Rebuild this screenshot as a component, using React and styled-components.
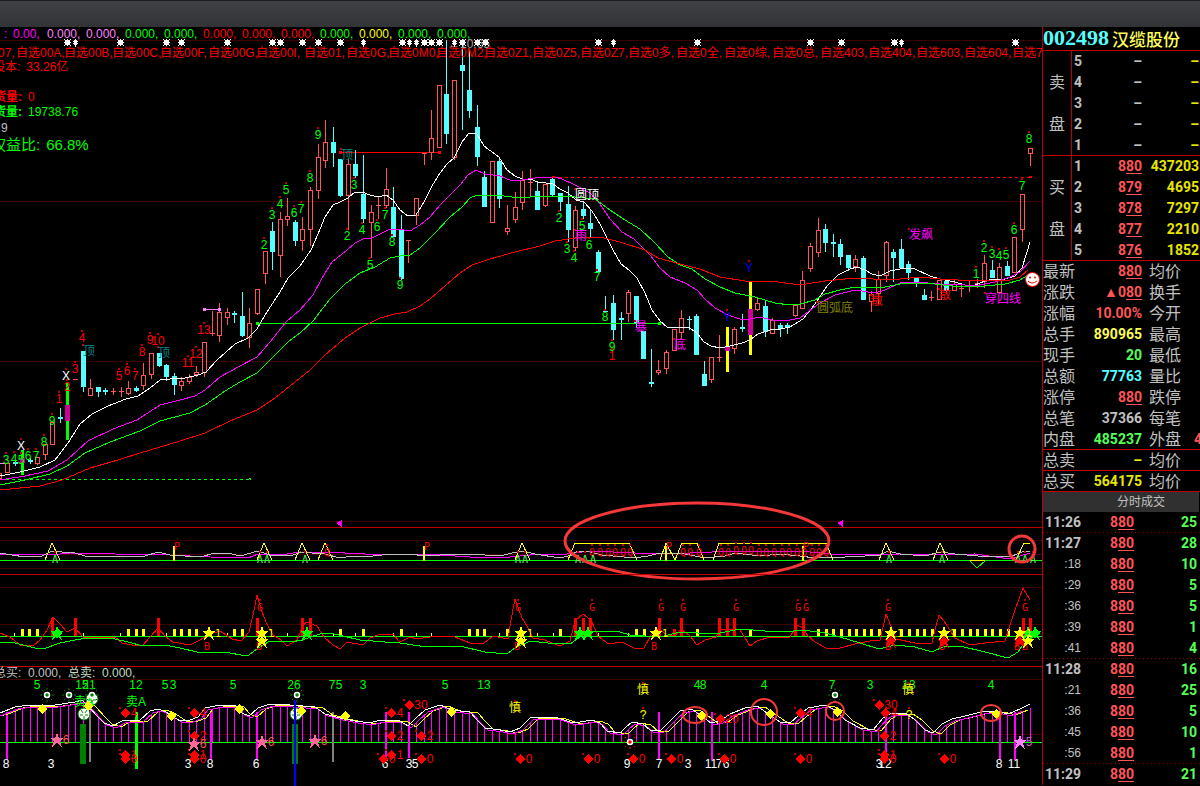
import React from 'react';
import styled, {createGlobalStyle} from 'styled-components';

const GlobalStyle = createGlobalStyle`
    body {
        margin: 0;
        background: #000;
        color: #c0c0c0;
        font-family: 'Liberation Sans', 'Noto Sans CJK SC', sans-serif;
        font-size: 12px;
        overflow: hidden;
    }
`

const RED = '#ff0000';
const ROSE = '#ff5555';
const GREEN = '#00ff00';
const LIME = '#55ff55';
const CYAN = '#55ffff';
const PINK = '#ff80ff';
const MAGENTA = '#ff00ff';
const YELLOW = '#ffff00';
const SILVER = '#c0c0c0';
const TEAL = '#008080';
const DARK = '#400000';
const BORDER = '#c00000';

const TitleBar = styled.header`
    box-sizing: border-box;
    height: 27px;
    border-top: 1px solid #1c1c1e;
    background: linear-gradient(#404145, #323337);
`

const Workspace = styled.div`
    display: flex;
    align-items: flex-start;
`

const Charts = styled.main`
    flex: 1;
    min-width: 0;
`

const Panel = styled.section`
    display: grid;
    grid-template-columns: minmax(0, 1fr);

    > * {
        grid-area: 1 / 1;
    }
`

const Plot = styled.svg`
    display: block;
    width: 100%;
    height: auto;
    overflow: visible;
    shape-rendering: crispEdges;

    text {
        font-size: 12px;
        text-anchor: middle;
    }

    text.mark {
        font: 10px 'DejaVu Sans Mono', monospace;
    }
`

const Info = styled.div`
    overflow: hidden;
    white-space: nowrap;
    z-index: 1;
`

const ParamRow = styled.div`
    display: flex;
    height: 14px;
    line-height: 14px;
    margin-left: ${props => props.$shift || 0}px;
`

const Param = styled.span`
    flex: none;
    width: ${props => props.$wide}px;
    color: ${props => props.$color};
`

const GroupRow = styled.nav`
    display: flex;
    height: 14px;
    margin: 5px 0 0 -26px;
    line-height: 14px;
`

const GroupLink = styled.a`
    flex: none;
    width: ${props => props.$wide}px;
    color: ${RED};
    text-decoration: none;
`

const Note = styled.div`
    display: flex;
    gap: 6px;
    height: ${props => props.$tall || 15}px;
    margin-left: ${props => props.$shift || 0}px;
    color: ${props => props.$color};
    font-size: ${props => props.$size || 12}px;
    line-height: ${props => props.$tall || 15}px;
`

const Side = styled.aside`
    box-sizing: border-box;
    flex: none;
    width: 158px;
    border-left: 1px solid ${BORDER};
    overflow: hidden;
`

const StockTitle = styled.h1`
    display: flex;
    align-items: center;
    gap: 3px;
    box-sizing: border-box;
    height: 24px;
    margin: 0;
    padding-bottom: 2px;
    box-shadow: inset 0 -1px ${BORDER};
    color: #ffff55;
    font-size: 17px;
    font-weight: 500;
    white-space: nowrap;
`

const StockCode = styled.span`
    color: ${CYAN};
    font: bold 22px 'Liberation Serif', serif;
`

const LevelBlock = styled.section`
    display: flex;
    box-shadow: inset 0 -1px ${BORDER};
`

const SideLabel = styled.h2`
    box-sizing: border-box;
    width: 29px;
    margin: 0;
    padding: 11px 0 0 6px;
    border-right: 1px solid ${BORDER};
    font-size: 16px;
    font-weight: 400;
    line-height: 42px;

    span {
        display: block;
    }
`

const Table = styled.table`
    flex: 1;
    width: 100%;
    table-layout: fixed;
    border-collapse: collapse;
    box-shadow: ${props => props.$plain ? 'none' : `inset 0 -1px ${BORDER}`};
`

const Row = styled.tr`
    height: 21px;
    background: ${props => props.$dotted ? `repeating-linear-gradient(90deg, #a00000 0 1px, transparent 1px 4px) bottom / 100% 1px no-repeat` : 'none'};
`

const Cell = styled.td`
    width: ${props => props.$wide ? `${props.$wide}px` : 'auto'};
    padding: 0 ${props => props.$end || 0}px 2px ${props => props.$start || 0}px;
    box-sizing: border-box;
    color: ${props => props.$color || SILVER};
    font: bold 14px/18px Roboto, sans-serif;
    text-align: ${props => props.$left ? 'left' : 'right'};
    white-space: nowrap;
    overflow: hidden;
`

const NameCell = styled.th`
    box-sizing: border-box;
    width: ${props => props.$wide}px;
    padding: 0 0 0 ${props => props.$start || 0}px;
    font-size: 16px;
    font-weight: 400;
    line-height: 20px;
    text-align: left;
    white-space: nowrap;
`

const Cents = styled.span`
    display: inline-block;
    border-bottom: 1px solid ${ROSE};
    line-height: 14px;
`

const Second = styled.span`
    font: 12px/18px 'Liberation Sans', sans-serif;
`

const TapeTitle = styled.h2`
    height: 20px;
    margin: 0 1px 0 0;
    padding-left: 74px;
    background: #303030;
    font-size: 12px;
    font-weight: 400;
    line-height: 20px;
`

const xAt = i => Math.round(7 + 7.575 * i);

// [index, rising, high, open/close top, open/close bottom, low]
const candles = [
    [-1, 1, 473, 473, 479, 479], [0, 1, 463, 463, 473, 473], [1, 0, 460, 462, 464, 466], [3, 0, 458, 460, 462, 464],
    [4, 1, 457, 457, 464, 465], [5, 1, 444, 444, 455, 460], [6, 1, 422, 422, 445, 445], [7, 0, 408, 417, 419, 423],
    [9, 1, 379, 379, 379, 379], [10, 0, 351, 351, 387, 392], [11, 1, 379, 388, 396, 396], [12, 0, 387, 387, 392, 397],
    [13, 0, 388, 390, 392, 395], [14, 1, 388, 391, 391, 395], [15, 1, 387, 391, 391, 397], [16, 1, 381, 388, 394, 395],
    [17, 0, 386, 388, 391, 392], [18, 1, 363, 375, 386, 390], [19, 1, 353, 353, 375, 379], [20, 0, 353, 353, 366, 367],
    [21, 0, 364, 365, 377, 381], [22, 0, 373, 376, 385, 395], [23, 1, 377, 381, 386, 391], [24, 1, 374, 377, 382, 384],
    [25, 1, 366, 372, 375, 377], [26, 1, 342, 342, 373, 377], [27, 1, 311, 333, 333, 336], [28, 1, 303, 312, 336, 342],
    [29, 1, 308, 312, 318, 325], [30, 0, 311, 313, 315, 323], [31, 0, 292, 316, 336, 337], [32, 1, 308, 323, 338, 348],
    [33, 1, 289, 289, 314, 315], [34, 1, 251, 251, 274, 284], [35, 0, 222, 231, 252, 270], [36, 1, 212, 219, 256, 277],
    [37, 1, 198, 216, 220, 226], [38, 0, 220, 222, 241, 246], [39, 1, 217, 229, 241, 251], [40, 1, 187, 190, 230, 246],
    [41, 1, 144, 157, 191, 199], [42, 1, 120, 142, 161, 168], [43, 0, 127, 142, 153, 167], [44, 0, 159, 159, 196, 197],
    [45, 1, 159, 164, 196, 230], [46, 0, 150, 164, 176, 178], [47, 0, 155, 194, 219, 223], [48, 1, 205, 212, 223, 258],
    [49, 1, 197, 205, 205, 219], [50, 1, 168, 189, 206, 208], [51, 0, 187, 207, 237, 237], [52, 0, 215, 229, 279, 280],
    [53, 1, 240, 240, 240, 263], [54, 1, 198, 198, 216, 225], [55, 1, 153, 153, 153, 165], [56, 1, 110, 138, 153, 160],
    [57, 1, 85, 85, 148, 148], [58, 0, 40, 94, 134, 144], [59, 1, 80, 80, 158, 160], [60, 0, 40, 65, 71, 130],
    [61, 0, 50, 90, 111, 118], [62, 0, 105, 127, 157, 166], [63, 0, 171, 177, 207, 207], [64, 1, 161, 161, 223, 223],
    [65, 0, 159, 161, 199, 208], [66, 1, 205, 228, 232, 235], [67, 1, 192, 207, 220, 223], [68, 1, 171, 180, 203, 210],
    [69, 1, 169, 182, 183, 196], [70, 0, 182, 191, 210, 210], [71, 1, 184, 184, 206, 207], [72, 0, 177, 179, 195, 196],
    [73, 0, 193, 193, 202, 211], [74, 0, 186, 204, 230, 242], [75, 1, 206, 210, 248, 251], [76, 0, 201, 209, 216, 219],
    [77, 0, 209, 223, 229, 237], [78, 0, 250, 252, 272, 272], [79, 0, 296, 311, 312, 312], [80, 0, 295, 303, 330, 340],
    [81, 0, 312, 318, 320, 340], [82, 1, 290, 292, 314, 322], [83, 0, 296, 296, 324, 328], [84, 0, 331, 331, 359, 359],
    [85, 0, 349, 382, 384, 387], [86, 1, 360, 370, 373, 375], [87, 1, 350, 352, 369, 374], [88, 1, 329, 329, 351, 351],
    [89, 1, 310, 318, 333, 339], [90, 0, 316, 319, 320, 330], [91, 0, 314, 316, 355, 355], [92, 0, 361, 374, 386, 386],
    [93, 1, 357, 357, 380, 383], [94, 1, 335, 357, 357, 362], [96, 1, 327, 329, 349, 354], [97, 0, 314, 327, 329, 332],
    [99, 1, 298, 303, 310, 311], [100, 0, 301, 306, 332, 337], [101, 1, 318, 320, 334, 334], [102, 0, 323, 325, 329, 337],
    [103, 0, 323, 325, 328, 334], [104, 1, 305, 305, 316, 317], [105, 1, 271, 280, 309, 309], [106, 1, 243, 246, 269, 272],
    [107, 1, 218, 230, 253, 257], [108, 0, 224, 229, 243, 252], [109, 0, 234, 242, 244, 257], [110, 0, 239, 244, 257, 265],
    [111, 0, 255, 255, 268, 271], [112, 1, 255, 259, 267, 272], [113, 0, 256, 258, 300, 300], [114, 1, 291, 294, 302, 312],
    [115, 1, 271, 279, 294, 304], [116, 1, 241, 242, 276, 282], [117, 0, 249, 252, 258, 282], [118, 0, 239, 249, 268, 268],
    [119, 0, 261, 264, 273, 280], [120, 0, 278, 278, 282, 287], [121, 0, 289, 295, 300, 300], [122, 1, 291, 297, 297, 301],
    [123, 1, 280, 280, 300, 300], [124, 0, 281, 281, 291, 293], [125, 1, 279, 284, 291, 291], [126, 1, 285, 288, 288, 297],
    [127, 1, 281, 286, 286, 292], [128, 1, 279, 283, 286, 288], [129, 1, 255, 263, 282, 288], [130, 0, 260, 270, 278, 278],
    [131, 1, 263, 267, 293, 293], [132, 0, 261, 266, 276, 276], [133, 1, 237, 237, 273, 273], [134, 1, 194, 194, 230, 242],
    [135, 1, 148, 148, 154, 166]
];

const averages = [
    ['#ffffff', '0,476 20,472 40,467 55,460 68,443 80,424 92,414 108,406 126,399 138,396 150,388 160,380 170,379 185,378 198,375 206,372 217,360 235,344 248,338 257,329 265,315 280,292 288,278 300,266 311,250 318,234 325,217 333,205 340,202 348,198 355,192 362,192 370,195 378,197 386,195 393,200 400,210 408,216 416,215 424,202 432,186 440,173 447,164 454,158 462,142 469,133 477,134 484,146 492,152 499,157 507,170 515,176 522,179 530,179 538,182 546,183 553,184 560,189 568,193 576,200 584,202 592,211 600,224 613,250 621,264 629,270 637,278 645,293 652,310 660,321 667,327 675,328 688,327 697,333 704,342 711,346 720,348 730,346 742,343 750,340 758,334 770,330 780,329 790,327 803,319 815,304 827,286 838,275 850,269 857,267 865,270 872,274 880,276 890,271 905,268 915,269 930,276 940,279 955,282 965,285 975,285 985,281 993,279 1005,279 1015,276 1022,268 1027,252 1030,242'],
    [MAGENTA, '0,480 25,476 48,471 67,460 88,441 113,429 137,420 160,405 180,400 195,396 205,390 220,377 240,366 257,357 270,342 286,322 300,310 313,295 322,278 332,262 347,250 355,243 363,239 372,238 380,234 390,229 398,229 410,231 420,225 430,217 440,205 450,195 460,185 468,175 476,170 485,174 500,176 512,181 522,180 535,178 555,177 562,179 575,185 590,193 600,204 610,219 622,232 634,239 643,248 650,255 660,268 670,277 685,283 697,290 705,299 715,308 728,315 740,319 750,319 760,317 772,320 790,320 800,318 808,312 820,303 835,295 855,290 875,293 885,290 900,283 915,282 940,284 955,284 975,286 995,282 1010,277 1020,272 1030,261'],
    [GREEN, '0,485 25,480 50,474 67,466 85,453 110,442 140,431 160,421 190,413 205,405 225,391 240,382 257,373 272,358 288,342 300,333 313,321 330,299 345,284 360,273 375,267 390,258 400,256 410,255 420,248 435,233 450,217 462,207 470,198 477,195 495,195 512,197 530,197 560,196 575,197 595,199 610,210 625,220 640,229 655,243 668,257 680,265 692,269 705,279 720,287 735,293 755,297 775,303 790,305 800,304 815,300 825,294 840,290 855,287 870,288 885,287 900,284 915,283 935,284 960,287 985,286 1005,284 1020,280 1028,275'],
    [RED, '0,490 40,486 62,480 90,468 118,460 140,453 160,447 180,441 205,433 230,421 257,410 275,398 290,386 310,370 325,355 345,338 360,328 380,318 395,314 407,312 420,306 430,299 445,286 460,273 472,265 490,259 515,252 540,246 555,241 575,238 600,237 620,242 645,250 658,258 680,264 700,269 720,277 745,281 770,281 800,285 825,281 855,278 890,280 920,277 940,279 975,281 1010,280 1020,277 1028,270']
];

// [text, middle x, middle y, colour]
const countLabels = [
    ['3', 6, 460, GREEN], ['4', 14, 459, GREEN], ['5', 21, 460, GREEN], ['6', 28, 456, GREEN], ['7', 36, 456, GREEN],
    ['8', 44, 442, GREEN], ['9', 52, 421, GREEN], ['1', 59, 399, RED], ['2', 67, 387, RED], ['3', 75, 369, RED],
    ['4', 82, 338, RED], ['5', 119, 376, RED], ['6', 127, 371, RED], ['7', 135, 376, RED], ['8', 142, 352, RED],
    ['9', 150, 340, RED], ['10', 158, 341, RED], ['11', 188, 363, RED], ['12', 196, 354, RED], ['13', 204, 330, RED],
    ['2', 264, 245, GREEN], ['3', 272, 215, GREEN], ['4', 280, 204, GREEN], ['5', 286, 190, GREEN], ['6', 294, 213, GREEN],
    ['7', 301, 209, GREEN], ['8', 310, 178, GREEN], ['9', 318, 135, GREEN], ['2', 347, 236, GREEN], ['3', 354, 185, GREEN],
    ['4', 362, 230, GREEN], ['5', 370, 265, GREEN], ['6', 377, 227, GREEN], ['7', 385, 215, GREEN], ['8', 392, 242, GREEN],
    ['9', 400, 285, GREEN], ['2', 559, 218, GREEN], ['3', 567, 249, GREEN], ['4', 574, 258, GREEN], ['5', 582, 226, GREEN],
    ['6', 589, 245, GREEN], ['7', 597, 277, GREEN], ['8', 605, 317, GREEN], ['9', 612, 347, GREEN], ['1', 612, 356, RED],
    ['1', 976, 274, GREEN], ['2', 984, 248, GREEN], ['3', 992, 254, GREEN], ['4', 999, 256, GREEN], ['5', 1006, 255, GREEN],
    ['6', 1014, 230, GREEN], ['7', 1022, 186, GREEN], ['8', 1029, 139, GREEN], ['X', 21, 446, '#fff'], ['X', 66, 376, '#fff'],
    ['Y', 749, 268, '#0000ff'], ['Y', 727, 317, '#0000ff']
];

const wordLabels = [
    ['顶', 89, 351, TEAL], ['顶', 164, 353, TEAL], ['顶', 347, 155, TEAL], ['圆顶', 587, 195, '#fff'],
    ['雨', 581, 236, MAGENTA], ['暴', 641, 327, MAGENTA], ['底', 680, 345, MAGENTA], ['发飙', 921, 235, MAGENTA],
    ['穿四线', 1003, 299, MAGENTA], ['圆弧底', 835, 308, '#808000'], ['散', 877, 301, RED], ['散', 945, 295, RED]
];

const stars = [67, 120, 166, 181, 227, 272, 280, 302, 318, 340, 402, 424, 431, 439, 462, 477, 485, 598, 697, 810, 841, 894, 1015];
const slimStars = [75, 363, 409, 416, 454, 613, 901];

const Label = ({text, x, y, color, dot, mark}) => (
    <>
        {dot && <rect x={x - 1} y={y - 8} width={2} height={2} fill='#c00000' />}
        <text className={mark && 'mark'} x={x} y={y + 4} fill={color}>{text}</text>
    </>
)

const Line = ({y, color = DARK, from = 0, to = 1042, dash}) => (
    <path d={`M${from} ${y + 0.5}H${to}`} stroke={color} strokeDasharray={dash} />
)

const Curve = ({points, color}) => (
    <polyline points={points} fill='none' stroke={color} />
)

const Candle = ({data}) => {
    const [i, rising, high, top, bottom, low] = data;
    const x = xAt(i);
    const tall = bottom - top;
    if (!rising) {
        return (
            <g fill={CYAN}>
                <rect x={x} y={high} width={1} height={low - high} />
                <rect x={x - 2} y={top} width={5} height={Math.max(tall, 1)} />
            </g>
        );
    }
    return (
        <g fill={ROSE}>
            <rect x={x} y={high} width={1} height={Math.max(top - high, 0)} />
            <rect x={x} y={bottom} width={1} height={Math.max(low - bottom, 0)} />
            {tall < 2
                ? <rect x={x - 2} y={top} width={5} height={1} />
                : <rect x={x - 1.5} y={top + 0.5} width={4} height={tall - 1} fill='none' stroke={ROSE} />}
        </g>
    );
}

const Signal = ({x, top, bottom, from, to, color}) => (
    <g>
        <rect x={x - 1} y={top} width={3} height={bottom - top} fill={color} />
        <rect x={x - 2} y={from} width={5} height={to - from} fill='#cc0099' />
    </g>
)

const params = [
    [PINK, '0.000,'], [PINK, '0.000,'], [GREEN, '0.000,'], [GREEN, '0.000,'], [RED, '0.000,'], [RED, '0.000,'],
    [RED, '0.000,'], [GREEN, '0.000,'], [YELLOW, '0.000,'], [GREEN, '0.000,'], [GREEN, '0.000,']
];

const groups = ['07', '00A', '00B', '00C', '00F', '00G', '00I', '01', '0G', '0M0', '0M2', '0Z1', '0Z5', '0Z7', '0多', '0全', '0综', '0总', '403', '404', '603', '604', '705'];

const PricePanel = () => (
    <Panel>
        <Plot viewBox='0 27 1042 500'>
            <Line y={40} />
            <Line y={201} />
            <Line y={361} />
            <Line y={521} />
            <Line y={152} color={RED} from={341} to={440} />
            <Line y={177} color={RED} from={553} to={1030} dash='3 3' />
            <Line y={479} color={GREEN} to={250} dash='3 3' />
            <Line y={309} color={PINK} from={204} to={220} />
            <Line y={463} color={PINK} to={8} />
            {candles.map(c => <Candle key={c[0]} data={c} />)}
            <Signal x={22} top={450} bottom={475} from={458} to={463} color={GREEN} />
            <Signal x={67} top={383} bottom={440} from={405} to={421} color={GREEN} />
            <Signal x={727} top={327} bottom={372} from={346} to={351} color={YELLOW} />
            <Signal x={750} top={281} bottom={355} from={309} to={335} color={YELLOW} />
            <Line y={323} color={GREEN} from={257} to={660} />
            {averages.map(a => <Curve key={a[0]} color={a[0]} points={a[1]} />)}
            <path d='M256 322h3v3h-3zM658 322h3v3h-3zM248 478h3v3z' fill={GREEN} />
            <path d='M203 308h3v3h-3zM218 308h3v3h-3z' fill={PINK} />
            <path d='M339 151h3v3h-3zM438 151h3v3h-3zM552 176h3v2h-3zM1029 176h3v2h-3z' fill={RED} />
            <Label text='←10.65' x={469} y={44} color='#a0a0a0' />
            {stars.map(x => (
                <path key={x} d={`M${x - 2} 40h5v5h-5zM${x - 3} 39h1v1h-1zM${x} 39h1v7h-1zM${x + 3} 39h1v1h-1zM${x - 3} 42h7v1h-7zM${x - 3} 45h1v1h-1zM${x + 3} 45h1v1h-1z`} fill='#fff' />
            ))}
            {slimStars.map(x => <path key={x} d={`M${x} 39h1v8h-1zM${x - 2} 41h5v1h-5zM${x - 1} 40h3v5h-3zM${x - 2} 43h5v1h-5z`} fill='#fff' />)}
            {wordLabels.map(([t, x, y, c]) => (
                <g key={t + x}>
                    <rect x={x - 6 * t.length - 1} y={y - 7} width={2} height={2} fill='#c00000' />
                    <Label text={t} x={x} y={y} color={c} />
                </g>
            ))}
            {countLabels.map(([t, x, y, c]) => <Label key={t + x + y} text={t} x={x} y={y} color={c} dot />)}
            <g shapeRendering='auto'>
                <circle cx={1032.5} cy={279.5} r={7} fill='#fff' stroke={RED} />
                <circle cx={1030} cy={277.5} r={1} fill={RED} />
                <circle cx={1035} cy={277.5} r={1} fill={RED} />
                <path d='M1028 281q4 4 9 0' fill='none' stroke={RED} />
            </g>
            <path d='M336 523l6-3v7zM837 523l6-3v7z' fill={MAGENTA} />
        </Plot>
        <Info>
            <ParamRow $shift={4}>
                <Param $wide={9} $color={MAGENTA}>:</Param>
                <Param $wide={34} $color={MAGENTA}>0.00,</Param>
                {params.map(([color, text], i) => <Param key={i} $wide={39} $color={color}>{text}</Param>)}
            </ParamRow>
            <GroupRow>
                {groups.map(g => <GroupLink key={g} href={`#${g}`} $wide={g.length === 2 && /\w\w/.test(g) ? 42 : 48}>自选{g},</GroupLink>)}
            </GroupRow>
            <Note $shift={-7} $color={RED}><span>股本:</span>33.26亿</Note>
            <Note />
            <Note $shift={-6} $color={RED}><b>货量:</b><span>0</span></Note>
            <Note $shift={-6} $color={GREEN}><b>货量:</b><span>19738.76</span></Note>
            <Note $shift={1} $tall={17}>9</Note>
            <Note $shift={-9} $tall={16} $size={15} $color={GREEN}><span>权益比:</span>66.8%</Note>
        </Info>
    </Panel>
)

const peaks = [52, 264, 302, 325, 522, 886, 940];
const waveGrey = '0,553 12,555 25,557 42,556 52,551 62,552 75,553 85,556 120,557 145,556 158,552 170,555 200,557 215,553 228,553 240,556 258,551 270,555 290,556 302,552 312,553 325,554 340,558 352,556 365,557 390,554 410,554 425,556 440,555 470,554 500,556 512,553 522,551 535,554 560,558 572,555 577,551 590,552 602,555 635,558 648,556 660,553 680,553 690,555 705,558 725,556 735,553 760,556 780,554 800,556 815,558 845,557 865,556 880,555 888,551 900,554 925,556 940,552 955,554 990,557 1012,556 1022,552 1030,551';
const waveMagenta = '0,554 50,555 70,553 115,554 170,555 210,557 248,558 258,554 280,555 300,552 345,553 365,554 400,554 440,555 470,557 510,557 540,554 560,555 590,551 635,553 690,553 735,551 800,551 830,554 860,555 900,554 940,555 975,554 1010,559 1020,556 1030,553';
const qMarks = [[327, 552], [592, 552], [600, 552], [608, 552], [615, 552], [623, 552], [630, 552], [683, 552], [690, 552], [699, 552], [721, 552], [728, 552], [736, 550], [744, 550], [751, 550], [759, 552], [766, 552], [774, 552], [782, 552], [789, 552], [797, 552], [804, 552], [812, 552], [819, 552], [826, 552]];

const SignalPanel = () => (
    <Panel>
        <Plot viewBox='0 527 1042 47'>
            <Line y={527} color={BORDER} />
            <Line y={540} />
            <Line y={554} />
            <Line y={568} />
            <Curve points={waveMagenta} color={MAGENTA} />
            <Curve points={waveGrey} color={SILVER} />
            {peaks.map(x => <Curve key={x} points={`${x - 7},560 ${x},543 ${x + 8},560`} color={YELLOW} />)}
            <Curve points='568,560 575,543 629,543 637,560' color={YELLOW} />
            <Curve points='660,560 666,543 675,560 682,543 697,543 704,560' color={YELLOW} />
            <Curve points='713,560 719,543 826,543 833,560' color={YELLOW} />
            <Curve points='1016,560 1024,543 1030,543' color={YELLOW} />
            <Line y={560} color={GREEN} />
            <Line y={560} color={YELLOW} from={970} to={985} />
            <Curve points='970,561 977,568 985,561' color={GREEN} />
            {[174, 424, 666, 803].map(x => (
                <g key={x}>
                    <rect x={x - 1} y={546} width={2} height={15} fill={YELLOW} />
                    <Label text='P' x={x + 3} y={546} color={RED} mark />
                </g>
            ))}
            {qMarks.map(([x, y]) => <Label key={x} text='Q' x={x} y={y} color={RED} mark dot />)}
            {[55, 260, 267, 305, 518, 525, 578, 585, 593, 889, 942, 1018, 1025, 1033].map(x => (
                <Label key={x} text='A' x={x} y={559} color={LIME} mark dot />
            ))}
            <g fill='none' stroke='#f53838' strokeWidth={3} shapeRendering='auto'>
                <ellipse cx={697} cy={541} rx={132} ry={38} />
                <circle cx={1022} cy={549} r={13} />
            </g>
        </Plot>
    </Panel>
)

const tallBars = [52, 75, 158, 257, 302, 310, 575, 583, 590, 659, 681, 719, 727, 734, 795, 803, 1023, 1030];
const midBars = [22, 29, 37, 128, 136, 143, 174, 181, 189, 196, 234, 242, 340, 363, 401, 469, 477, 484, 507, 560, 636, 644, 697, 750, 818, 826, 833, 841, 849, 856, 864, 871, 879, 901, 909, 917, 924, 932, 954, 962, 970, 977, 985, 992, 1000, 1008];
const lowBars = [14, 83, 120, 166, 227, 287, 333, 355, 393, 416, 431, 499, 537, 553, 598, 628];
const strengthRed = '0,633 10,637 20,645 33,646 40,640 47,630 53,617 60,624 67,632 75,628 83,637 97,638 115,637 122,643 137,646 143,645 150,637 158,628 166,637 173,642 190,645 200,640 210,634 220,631 232,639 241,641 249,632 253,615 257,595 262,612 267,624 273,635 281,640 287,646 297,640 302,628 306,622 317,626 324,637 333,645 340,649 347,642 363,645 370,638 378,635 393,634 400,642 410,637 417,639 430,637 440,636 455,637 470,643 484,643 493,636 508,639 511,620 515,599 522,618 527,626 533,638 545,640 552,643 560,646 570,641 575,621 583,614 591,620 598,636 607,643 615,643 622,642 634,648 644,648 651,635 659,628 666,635 675,636 681,629 690,636 697,645 705,640 716,637 721,629 740,630 750,646 757,641 770,637 790,637 797,625 803,628 808,636 815,642 826,648 840,648 855,644 870,641 880,640 886,614 891,626 896,639 915,643 932,643 935,630 939,615 944,621 955,638 970,645 985,643 1005,641 1010,625 1015,610 1023,588 1030,600';
const strengthGreen = '0,642 15,643 35,648 46,648 60,643 75,640 87,638 115,639 128,642 143,646 165,645 180,648 197,652 230,653 241,655 249,655 258,648 270,641 290,642 303,640 310,637 320,634 330,633 343,636 360,640 385,642 400,643 420,646 460,646 485,652 507,654 515,648 530,641 548,643 570,644 580,637 590,631 620,632 630,635 660,637 680,632 715,634 740,629 765,631 785,632 803,630 825,633 840,637 860,643 879,649 895,645 915,647 932,652 945,646 960,646 985,652 1008,658 1018,652 1022,646';

const Star = ({x, y, color}) => (
    <path transform={`translate(${x} ${y})`} d='M0-7L2-2H7L3 1L5 7L0 3L-5 7L-3 1L-7-2H-2Z' fill={color} />
)

const StrengthPanel = () => (
    <Panel>
        <Plot viewBox='0 574 1042 92'>
            <Line y={574} color={BORDER} />
            <Line y={587} />
            <Line y={624} />
            <Line y={660} />
            {tallBars.map(x => <rect key={x} x={x - 1} y={618} width={3} height={19} fill={RED} />)}
            {midBars.map(x => <rect key={x} x={x - 1} y={629} width={3} height={8} fill={YELLOW} />)}
            {lowBars.map(x => <rect key={x} x={x} y={633} width={1} height={4} fill={YELLOW} />)}
            <rect x={673} y={629} width={3} height={8} fill={RED} />
            <Line y={636} color={GREEN} />
            <Curve points={strengthRed} color={RED} />
            <Curve points={strengthGreen} color={GREEN} />
            {[207, 259, 517, 654, 888, 942, 1017, 1025].map(x => <Label key={x} text='B' x={x} y={646} color={RED} mark />)}
            {[260, 518, 592, 661, 683, 736, 798, 806, 888, 1025].map(x => <Label key={x} text='G' x={x} y={607} color={RED} mark dot />)}
            {[891, 944, 1020].map(x => <Star key={x} x={x} y={641} color={RED} />)}
            {[57, 307, 580, 588, 1028, 1035].map(x => <Star key={x} x={x} y={633} color={GREEN} />)}
            {[262, 521, 1028].map(x => <Star key={x} x={x} y={641} color={YELLOW} />)}
            {[209, 262, 521, 656, 891, 944, 1020].map(x => (
                <g key={x}>
                    <Star x={x} y={633} color={YELLOW} />
                    <Label text='1' x={x + 9} y={633} color={YELLOW} mark />
                </g>
            ))}
            <path d='M57 628l5 5l-5 6l-5-6zM1035 628l5 5l-5 6l-5-6z' fill={GREEN} />
        </Plot>
    </Panel>
)

const wave = [
    [-8, 715], [0, 713], [15, 707], [30, 705], [55, 705], [75, 702], [82, 700], [88, 706], [97, 716], [104, 723], [113, 726], [122, 721], [140, 720],
    [150, 711], [158, 709], [166, 712], [180, 721], [190, 720], [198, 717], [205, 708], [220, 705], [235, 705], [242, 713],
    [249, 716], [258, 708], [270, 704], [290, 705], [315, 707], [325, 714], [340, 718], [355, 721], [370, 723], [380, 720],
    [400, 721], [408, 726], [416, 718], [425, 710], [440, 705], [452, 710], [470, 712], [477, 720], [485, 728], [500, 730],
    [510, 732], [520, 728], [530, 718], [555, 717], [570, 722], [580, 722], [592, 720], [600, 723], [607, 731], [620, 733],
    [625, 728], [632, 722], [643, 724], [650, 730], [660, 731], [670, 721], [680, 711], [692, 709], [700, 715], [711, 723],
    [720, 721], [730, 714], [745, 708], [757, 706], [767, 713], [780, 722], [790, 723], [798, 716], [808, 708], [825, 705],
    [835, 710], [845, 720], [860, 728], [873, 730], [883, 718], [892, 713], [905, 713], [914, 719], [925, 730], [933, 733],
    [942, 724], [952, 719], [965, 716], [985, 711], [1000, 712], [1008, 714], [1020, 709], [1030, 704]
];

const shifted = (dx, dy) => wave.map(([x, y]) => [x + dx, y + dy]).filter(p => p[0] < 1031).join(' ');

const waveY = at => {
    const k = wave.findIndex(p => p[0] >= at);
    if (k < 1) return wave[wave.length - 1][1];
    const [x0, y0] = wave[k - 1];
    const [x1, y1] = wave[k];
    return Math.round(y0 + (y1 - y0) * (at - x0) / (x1 - x0));
}

const topCounts = [['5', 37], ['15', 82], ['21', 89], ['12', 136], ['5', 165], ['3', 173], ['5', 233], ['26', 294], ['7', 332], ['5', 339], ['3', 363], ['5', 445], ['13', 484], ['4', 697], ['8', 703], ['4', 764], ['7', 832], ['3', 870], ['13', 909], ['4', 991]];
const bottomCounts = [['8', 6], ['3', 51], ['3', 188], ['8', 210], ['6', 256], ['6', 385], ['3', 409], ['5', 415], ['9', 627], ['7', 659], ['3', 688], ['11', 711], ['7', 719], ['6', 726], ['3', 879], ['12', 885], ['8', 999], ['11', 1014]];
const longBars = [[7, 712, 760], [211, 712, 760], [257, 712, 760], [386, 712, 760], [409, 712, 758], [659, 712, 760], [712, 712, 760], [886, 716, 760], [1000, 714, 760], [1015, 712, 760]];
const yellowDiamonds = [[42, 709], [88, 706], [171, 716], [239, 709], [301, 711], [345, 716], [451, 712], [701, 716], [770, 714], [837, 712], [996, 714]];
const redDiamonds = [
    [125, 713, '4'], [125, 755, '1'], [125, 759, '0'], [194, 713, '4'], [194, 736, '2'], [194, 755, '1'], [194, 759, '0'],
    [391, 713, '4'], [391, 736, '2'], [391, 755, '1'], [383, 759, '0'], [409, 705, '30'], [421, 736, '2'], [421, 759, '0'],
    [520, 759, '0'], [588, 759, '0'], [633, 759, '0'], [671, 759, '0'], [724, 759, '0'], [720, 719, '20'], [800, 713, '4'],
    [800, 759, '0'], [879, 705, '30'], [885, 713, '4'], [884, 736, '2'], [884, 755, '1'], [884, 759, '0'], [944, 759, '0']
];

const Diamond = ({x, y, color}) => <path d={`M${x} ${y - 5}l5 5l-5 5l-5-5z`} fill={color} />

const Ring = ({x, y, color}) => (
    <g shapeRendering='auto'>
        <path transform={`translate(${x} ${y})`} d='M0-7v2M0 5v2M-7 0h2M5 0h2M-5-5l1 1M5-5l-1 1M-5 5l1-1M5 5l-1-1' stroke={color} />
        <circle cx={x} cy={y} r={2.5} fill={color} stroke='#fff' strokeWidth={1.5} />
    </g>
)

const Wheel = ({x, y}) => (
    <g shapeRendering='auto'>
        <circle cx={x} cy={y} r={6} fill='#fff' stroke='#008000' />
        <path d={`M${x - 3} ${y - 4}l2 3M${x + 3} ${y - 4}l-2 3M${x - 4} ${y + 1}h3M${x + 1} ${y + 1}h3M${x} ${y + 2}v3`} stroke='#008000' />
    </g>
)

const WavePanel = () => (
    <Panel>
        <Plot viewBox='0 666 1042 120'>
            <Line y={666} color={BORDER} />
            <Line y={679} />
            <Line y={734} />
            {Array.from({length: 136}, (_, i) => xAt(i)).map(x => (
                <path key={x} d={`M${x + 0.5} ${waveY(x - 3) + 2}V742`} stroke={MAGENTA} />
            ))}
            <Line y={742} color={GREEN} />
            {longBars.map(([x, from, to]) => <rect key={x} x={x - 1} y={from} width={2} height={to - from} fill={MAGENTA} />)}
            <rect x={80} y={724} width={6} height={40} fill='#008000' />
            <rect x={292} y={724} width={6} height={40} fill='#008000' />
            <rect x={89} y={714} width={2} height={48} fill='#808080' />
            <rect x={332} y={712} width={2} height={50} fill='#808080' />
            <rect x={135} y={712} width={3} height={57} fill={GREEN} />
            <Curve points={shifted(8, 1)} color={YELLOW} />
            <Curve points={shifted(3, 2)} color={MAGENTA} />
            <Curve points={shifted(0, 0)} color='#fff' />
            {topCounts.map(([t, x]) => <Label key={t + x} text={t} x={x} y={685} color={GREEN} />)}
            {bottomCounts.map(([t, x]) => <Label key={t + x} text={t} x={x} y={764} color='#fff' />)}
            <Wheel x={92} y={699} />
            <Wheel x={84} y={714} />
            <Wheel x={296} y={714} />
            <Label text='卖A' x={84} y={702} color={GREEN} />
            <Label text='卖A' x={136} y={702} color={GREEN} />
            <rect x={294} y={700} width={2} height={86} fill='#0000ff' />
            {[47, 69, 92, 297, 835].map(x => <Ring key={x} x={x} y={695} color='#008000' />)}
            <Ring x={630} y={742} color={RED} />
            {yellowDiamonds.map(([x, y]) => <Diamond key={x} x={x} y={y} color={YELLOW} />)}
            {redDiamonds.map(([x, y, t]) => (
                <g key={`${x}-${y}`}>
                    <rect x={x - 6} y={y - 6} width={2} height={2} fill='#c00000' />
                    <Diamond x={x} y={y} color={RED} />
                    <Label text={t} x={x + (t.length > 1 ? 12 : 9)} y={y} color={RED} />
                </g>
            ))}
            {[[57, 740], [194, 744], [262, 742], [315, 741]].map(([x, y]) => (
                <g key={x}>
                    <Star x={x} y={y} color='#ff6699' />
                    <Label text='6' x={x + 9} y={y} color={ROSE} />
                </g>
            ))}
            <Star x={1020} y={742} color={PINK} />
            <Label text='5' x={1029} y={742} color='#cc55cc' />
            <Label text='慎' x={643} y={690} color={YELLOW} dot />
            <Label text='慎' x={515} y={708} color={YELLOW} dot />
            <Label text='慎' x={908} y={690} color={YELLOW} dot />
            <Label text='?' x={643} y={715} color={YELLOW} dot />
            <Label text='?' x={909} y={715} color={YELLOW} dot />
            <g fill='none' stroke='#f53838' strokeWidth={2} shapeRendering='auto'>
                <ellipse cx={695} cy={715} rx={12} ry={8} />
                <circle cx={764} cy={712} r={13} />
                <circle cx={835} cy={711} r={9} />
                <ellipse cx={991} cy={713} rx={10} ry={8} />
            </g>
        </Plot>
        <Info>
            <ParamRow $shift={-6}>
                <Param $wide={74} $color={SILVER}>总买: &nbsp;0.000,</Param>
                <Param $wide={74} $color='#c0dcc0'>总卖: &nbsp;0.000,</Param>
            </ParamRow>
        </Info>
    </Panel>
)

const Price = ({value}) => <>{value.slice(0, -2)}<Cents>{value.slice(-2)}</Cents></>

const sells = [['5'], ['4'], ['3'], ['2'], ['1']];
const buys = [['1', '880', '437203'], ['2', '879', '4695'], ['3', '878', '7297'], ['4', '877', '2210'], ['5', '876', '1852']];

const Levels = ({name, rows}) => (
    <LevelBlock>
        <SideLabel>{name.split('').map(ch => <span key={ch}>{ch}</span>)}</SideLabel>
        <Table $plain>
            <tbody>
                {rows.map(([level, price, volume]) => (
                    <Row key={level}>
                        <Cell $wide={20} $start={2} $left>{level}</Cell>
                        <Cell $wide={50} $color={price ? ROSE : SILVER}>{price ? <Price value={price} /> : '–'}</Cell>
                        <Cell $end={1} $color='#e6e600'>{volume || '–'}</Cell>
                    </Row>
                ))}
            </tbody>
        </Table>
    </LevelBlock>
)

const stats = [
    ['最新', <Price value='880' />, ROSE, '均价'], ['涨跌', <>▲0<Cents>80</Cents></>, ROSE, '换手'], ['涨幅', '10.00%', ROSE, '今开'],
    ['总手', '890965', '#ffff55', '最高'], ['现手', '20', LIME, '最低'], ['总额', '77763', CYAN, '量比'],
    ['涨停', <Price value='880' />, ROSE, '跌停'], ['总笔', '37366', SILVER, '每笔'], ['内盘', '485237', LIME, '外盘', '4']
];

const Stats = ({rows}) => (
    <Table>
        <tbody>
            {rows.map(([name, value, color, other, more]) => (
                <Row key={name}>
                    <NameCell $wide={34}>{name}</NameCell>
                    <Cell $wide={65} $color={color}>{value}</Cell>
                    <NameCell $wide={45} $start={7}>{other}</NameCell>
                    <Cell $start={7} $color={ROSE} $left>{more}</Cell>
                </Row>
            ))}
        </tbody>
    </Table>
)

const ticks = [
    ['11:26', '25', true], ['11:27', '28'], [':18', '10'], [':29', '5'], [':36', '5'], [':39', '1'], [':41', '4', true],
    ['11:28', '16'], [':21', '25'], [':36', '5'], [':45', '10'], [':56', '1', true], ['11:29', '21']
];

const App = () => (
    <>
        <GlobalStyle />
        <TitleBar />
        <Workspace>
            <Charts>
                <PricePanel />
                <SignalPanel />
                <StrengthPanel />
                <WavePanel />
            </Charts>
            <Side>
                <StockTitle><StockCode>002498</StockCode>汉缆股份</StockTitle>
                <Levels name='卖盘' rows={sells} />
                <Levels name='买盘' rows={buys} />
                <Stats rows={stats} />
                <Stats rows={[['总卖', '–', '#e6e600', '均价']]} />
                <Stats rows={[['总买', '564175', '#e6e600', '均价']]} />
                <TapeTitle>分时成交</TapeTitle>
                <Table $plain>
                    <tbody>
                        {ticks.map(([time, volume, dotted]) => (
                            <Row key={time + volume} $dotted={dotted}>
                                <Cell $wide={38}>{time[0] === ':' ? <Second>{time}</Second> : time}</Cell>
                                <Cell $wide={53} $color={ROSE}><Price value='880' /></Cell>
                                <Cell $end={3} $color={LIME}>{volume}</Cell>
                            </Row>
                        ))}
                    </tbody>
                </Table>
            </Side>
        </Workspace>
    </>
)

export default App;
